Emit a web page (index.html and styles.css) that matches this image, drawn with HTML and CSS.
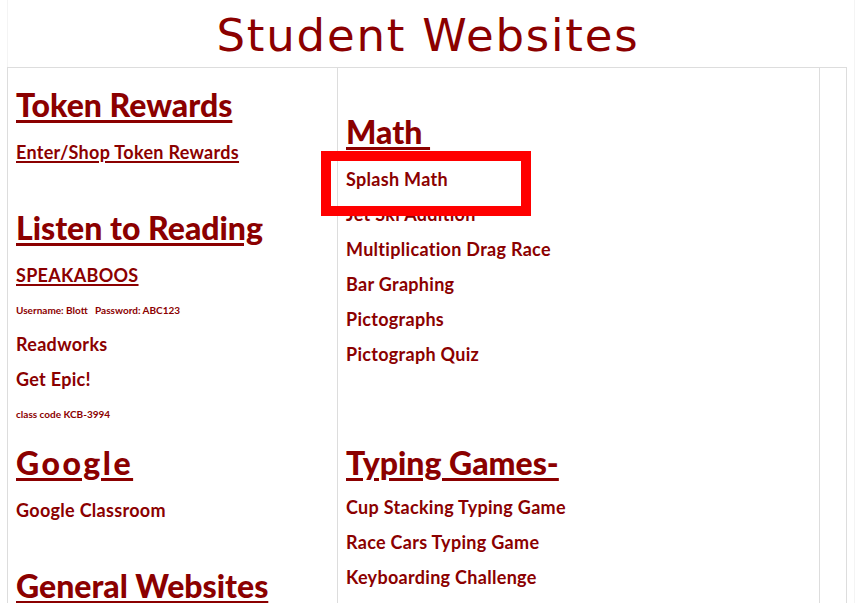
FILE: index.html
```html
<!DOCTYPE html>
<html lang="en">
<head>
    <meta charset="UTF-8">
    <meta name="viewport" content="width=device-width, initial-scale=1.0">
    <title>Student Websites</title>
    <link rel="stylesheet" href="styles.css">
</head>
<body>
    <div class="page">
        <h1 class="page-title">Student Websites</h1>
        <div class="board">
            <div class="column">
                <h2 class="section-title"><a href="#">Token Rewards</a></h2>
                <p class="site-link"><a href="#" class="underlined">Enter/Shop Token Rewards</a></p>
                <p class="blank">&nbsp;</p>
                <h2 class="section-title"><a href="#">Listen to Reading</a></h2>
                <p class="site-link"><a href="#" class="underlined">SPEAKABOOS</a></p>
                <p class="note">Username: Blott&nbsp;&nbsp;&nbsp;Password: ABC123</p>
                <p class="site-link"><a href="#">Readworks</a></p>
                <p class="site-link"><a href="#">Get Epic!</a></p>
                <p class="note">class code KCB-3994</p>
                <h2 class="section-title section-title--spaced"><a href="#" class="wide">Google</a></h2>
                <p class="site-link"><a href="#">Google Classroom</a></p>
                <p class="blank">&nbsp;</p>
                <h2 class="section-title"><a href="#">General Websites</a></h2>
            </div>
            <div class="column">
                <h2 class="section-title section-title--late"><a href="#">Math&nbsp;</a></h2>
                <p class="site-link"><a href="#">Splash Math</a></p>
                <p class="site-link"><a href="#">Jet Ski Addition</a></p>
                <p class="site-link"><a href="#">Multiplication Drag Race</a></p>
                <p class="site-link"><a href="#">Bar Graphing</a></p>
                <p class="site-link"><a href="#">Pictographs</a></p>
                <p class="site-link"><a href="#">Pictograph Quiz</a></p>
                <p class="blank">&nbsp;</p>
                <p class="blank">&nbsp;</p>
                <h2 class="section-title section-title--tight"><a href="#">Typing Games-</a></h2>
                <p class="site-link"><a href="#">Cup Stacking Typing Game</a></p>
                <p class="site-link"><a href="#">Race Cars Typing Game</a></p>
                <p class="site-link"><a href="#">Keyboarding Challenge</a></p>
            </div>
            <div class="column column--narrow"></div>
        </div>
        <!-- annotation box drawn over the page -->
        <div class="highlight"></div>
    </div>
</body>
</html>
```

FILE: styles.css
```css
html, body {
    margin: 0;
    padding: 0;
    background-color: #fff;
    overflow: hidden;
}
body {
    font-family: Lato, 'Liberation Sans', sans-serif;
    color: #8b0000;
}
a {
    color: #8b0000;
    text-decoration: none;
}
.page {
    position: relative;
    width: 846px;
    margin-left: 7px;
    border-left: 1px solid #f4f4f4;
    border-right: 1px solid #f4f4f4;
    height: 603px;
}
.page-title {
    margin: 0 0 1px -7px;
    padding-top: 6px;
    width: 854px;
    font-family: 'DejaVu Sans', Verdana, sans-serif;
    font-size: 45px;
    font-weight: normal;
    line-height: 60px;
    letter-spacing: 1.8px;
    text-align: center;
    color: #8b0000;
}
.board {
    display: grid;
    grid-template-columns: 330px 482px 27px;
    width: 839px;
    margin-left: -1px;
    border-top: 1px solid #ddd;
    border-left: 1px solid #ddd;
    height: 540px;
}
.column {
    border-right: 1px solid #ddd;
    padding: 14px 8px 0 8px;
    overflow: hidden;
}
.column--narrow {
    padding: 0;
}
.section-title {
    margin: 3px 0 10px;
    font-size: 32px;
    font-weight: 900;
    line-height: 40px;
    white-space: nowrap;
}
.section-title a {
    text-decoration: underline;
    text-decoration-thickness: 3px;
    text-underline-offset: 3px;
}
.section-title .wide {
    letter-spacing: 2.5px;
}
.section-title--spaced {
    margin-top: 12px;
}
.section-title--late {
    margin-top: 30px;
}
.section-title--tight {
    margin-top: 1px;
    margin-bottom: 7px;
}
.site-link, .blank {
    margin: 0;
    font-size: 18px;
    font-weight: 700;
    line-height: 35px;
    letter-spacing: 0.3px;
    white-space: nowrap;
}
.underlined {
    text-decoration: underline;
    text-decoration-thickness: 2px;
    text-underline-offset: 2px;
}
.note {
    margin: 0;
    font-size: 10px;
    font-weight: 700;
    line-height: 34px;
}
.highlight {
    position: absolute;
    left: 313px;
    top: 151px;
    width: 190px;
    height: 45px;
    border: 10px solid #ff0000;
}
```
